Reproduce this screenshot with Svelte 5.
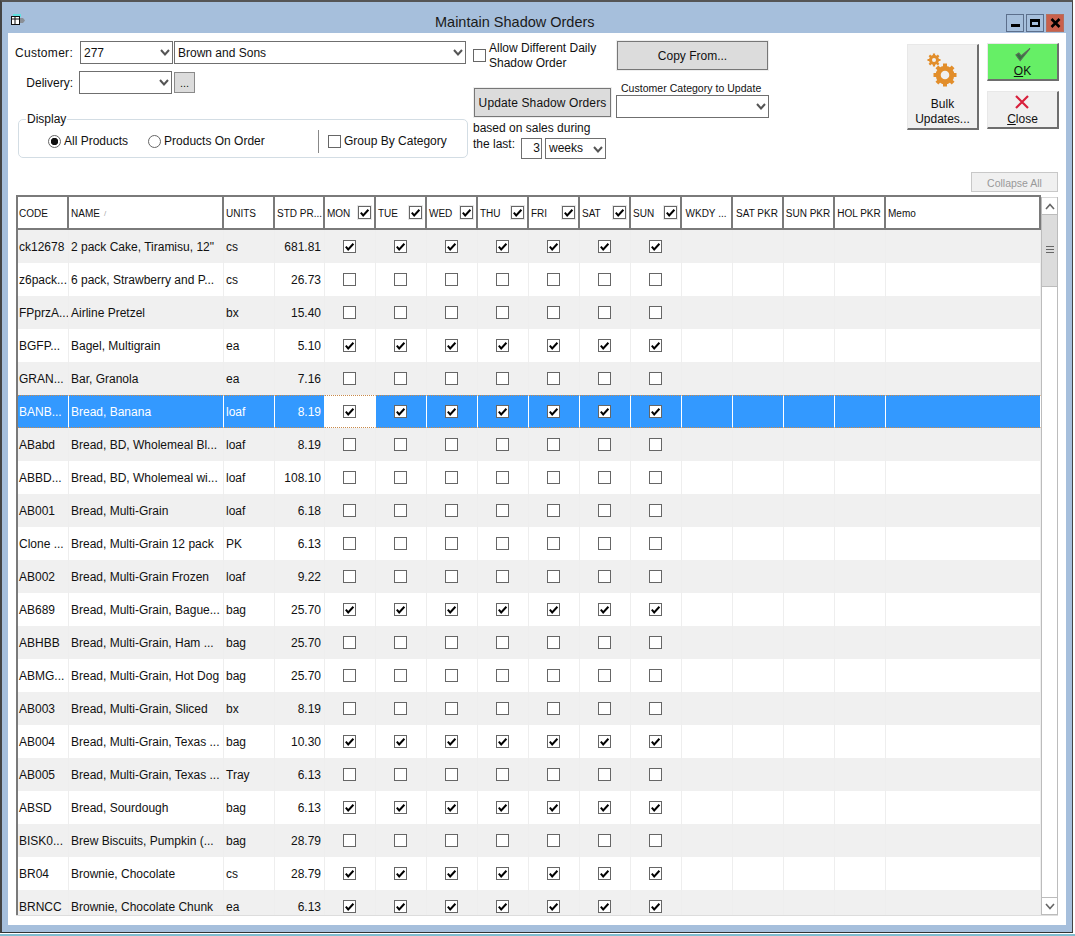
<script lang="ts">
	const days = ['MON', 'TUE', 'WED', 'THU', 'FRI', 'SAT', 'SUN']
	const pickers = ['WKDY ...', 'SAT PKR', 'SUN PKR', 'HOL PKR']

	const products = [
		['ck12678', '2 pack Cake, Tiramisu, 12"', 'cs', '681.81', true],
		['z6pack...', '6 pack, Strawberry and P...', 'cs', '26.73', false],
		['FPprzA...', 'Airline Pretzel', 'bx', '15.40', false],
		['BGFP...', 'Bagel, Multigrain', 'ea', '5.10', true],
		['GRAN...', 'Bar, Granola', 'ea', '7.16', false],
		['BANB...', 'Bread, Banana', 'loaf', '8.19', true],
		['ABabd', 'Bread, BD, Wholemeal Bl...', 'loaf', '8.19', false],
		['ABBD...', 'Bread, BD, Wholemeal wi...', 'loaf', '108.10', false],
		['AB001', 'Bread, Multi-Grain', 'loaf', '6.18', false],
		['Clone ...', 'Bread, Multi-Grain 12 pack', 'PK', '6.13', false],
		['AB002', 'Bread, Multi-Grain Frozen', 'loaf', '9.22', false],
		['AB689', 'Bread, Multi-Grain, Bague...', 'bag', '25.70', true],
		['ABHBB', 'Bread, Multi-Grain, Ham ...', 'bag', '25.70', false],
		['ABMG...', 'Bread, Multi-Grain, Hot Dog', 'bag', '25.70', false],
		['AB003', 'Bread, Multi-Grain, Sliced', 'bx', '8.19', false],
		['AB004', 'Bread, Multi-Grain, Texas ...', 'bag', '10.30', true],
		['AB005', 'Bread, Multi-Grain, Texas ...', 'Tray', '6.13', false],
		['ABSD', 'Bread, Sourdough', 'bag', '6.13', true],
		['BISK0...', 'Brew Biscuits, Pumpkin (...', 'bag', '28.79', false],
		['BR04', 'Brownie, Chocolate', 'cs', '28.79', true],
		['BRNCC', 'Brownie, Chocolate Chunk', 'ea', '6.13', true],
	]
	const selectedRow = 5
</script>

{#snippet combo(text, width)}
	<div class="combo" style="width: {width}px">
		<span>{text}</span>
		<svg class="chev" width="10" height="7" viewBox="0 0 10 7"><path d="M1 1 L5 5.5 L9 1" fill="none" stroke="#555" stroke-width="2" /></svg>
	</div>
{/snippet}

{#snippet check(on)}
	<span class="check">
		{#if on}
			<svg width="11" height="11" viewBox="0 0 11 11"><path d="M1.8 5.6 L4.2 8.4 L9.4 2.8" fill="none" stroke="#000" stroke-width="2" /></svg>
		{/if}
	</span>
{/snippet}

<div class="window">
	<div class="titlebar">
		<svg class="appicon" width="16" height="12" viewBox="0 0 16 12">
			<path d="M3 0 H11 V3 H3 Z" fill="#5fe0e0" />
			<rect x="1.5" y="2.5" width="8" height="8" fill="#fff" stroke="#111" />
			<path d="M1.5 5 H9.5 M5 2.5 V10.5" stroke="#111" />
			<path d="M10 4 H13 L15 6.5 L13 9 H10 Z" fill="#8a8f96" />
		</svg>
		<div class="title">Maintain Shadow Orders</div>
		<div class="winbtns">
			<div class="winbtn"><span class="min"></span></div>
			<div class="winbtn"><span class="max"></span></div>
			<div class="winbtn close">
				<svg width="11" height="10" viewBox="0 0 11 10"><path d="M1.5 1 L9.5 9 M9.5 1 L1.5 9" stroke="#000" stroke-width="2.6" /></svg>
			</div>
		</div>
	</div>

	<div class="client">
		<div class="top">
			<div class="col-fields">
				<div class="field">
					<span class="lbl">Customer:</span>
					{@render combo('277', 93)}
					{@render combo('Brown and Sons', 292)}
				</div>
				<div class="field second">
					<span class="lbl">Delivery:</span>
					{@render combo('', 93)}
					<div class="dots">...</div>
				</div>
				<fieldset class="display">
					<legend>Display</legend>
					<div class="radio on"></div>
					<span class="opt-a">All Products</span>
					<div class="radio"></div>
					<span class="opt-b">Products On Order</span>
					<div class="divider"></div>
					{@render check(false)}
					<span class="opt-c">Group By Category</span>
				</fieldset>
			</div>

			<div class="col-update">
				<div class="allow">
					{@render check(false)}
					<span>Allow Different Daily<br />Shadow Order</span>
				</div>
				<div class="gbtn update">Update Shadow Orders</div>
				<div class="based">based on sales during</div>
				<div class="last">
					<span>the last:</span>
					<div class="num">3</div>
					{@render combo('weeks', 61)}
				</div>
			</div>

			<div class="col-copy">
				<div class="gbtn copy">Copy From...</div>
				<div class="catlbl">Customer Category to Update</div>
				{@render combo('', 153)}
			</div>

			<div class="col-actions">
				<div class="actions">
					<div class="abtn bulk">
						<svg width="36" height="36" viewBox="0 0 36 36">
							<circle cx="9" cy="8" r="3.6" fill="none" stroke="#e28e2b" stroke-width="2.8" />
							<path d="M9 1.5 V14.5 M2.5 8 H15.5 M4.4 3.4 L13.6 12.6 M13.6 3.4 L4.4 12.6" stroke="#e28e2b" stroke-width="2.2" />
							<circle cx="9" cy="8" r="2" fill="#f0f0f0" />
							<circle cx="20" cy="23" r="11" fill="#f0f0f0" />
							<path d="M20 11.5 V34.5 M8.5 23 H31.5 M11.9 14.9 L28.1 31.1 M28.1 14.9 L11.9 31.1" stroke="#e28e2b" stroke-width="4" />
							<circle cx="20" cy="23" r="6.8" fill="none" stroke="#e28e2b" stroke-width="5" />
							<circle cx="20" cy="23" r="4.3" fill="#f0f0f0" />
						</svg>
						<span class="bulk-text">Bulk<br />Updates...</span>
					</div>
					<div class="stack">
						<div class="abtn ok">
							<svg width="18" height="16" viewBox="0 0 18 16"><path d="M1.5 8.5 L6 14.5 L16.5 1.5 L7 9.5 L4.5 6.5 Z" fill="#2c7a3a" stroke="#5a6a5a" stroke-width="1.2" /></svg>
							<span><u>O</u>K</span>
						</div>
						<div class="abtn cancel">
							<svg class="x" width="14" height="14" viewBox="0 0 14 14"><path d="M1 1 L13 13 M13 1 L1 13" stroke="#d8203c" stroke-width="2.2" /></svg>
							<span><u>C</u>lose</span>
						</div>
					</div>
				</div>
				<div class="collapse">Collapse All</div>
			</div>
		</div>

		<div class="grid">
			<div class="table">
				<div class="row head">
					<div class="cell">CODE</div>
					<div class="cell">NAME <span class="sort">/</span></div>
					<div class="cell">UNITS</div>
					<div class="cell right">STD PR...</div>
					{#each days as day}
						<div class="cell day"><span>{day}</span><span class="hcheck">{@render check(true)}</span></div>
					{/each}
					{#each pickers as picker}
						<div class="cell mid">{picker}</div>
					{/each}
					<div class="cell memo">Memo</div>
				</div>
				<div class="body">
					{#each products as [code, name, units, price, checked], i}
						<div class="row" class:alt={i % 2 === 0} class:selected={i === selectedRow}>
							<div class="cell">{code}</div>
							<div class="cell">{name}</div>
							<div class="cell">{units}</div>
							<div class="cell right">{price}</div>
							{#each days as day, d}
								<div class="cell mid" class:active={i === selectedRow && d === 0}>{@render check(checked)}</div>
							{/each}
							{#each pickers as picker}
								<div class="cell"></div>
							{/each}
							<div class="cell"></div>
						</div>
					{/each}
				</div>
			</div>
			<div class="scrollbar">
				<div class="arrow">
					<svg width="10" height="7" viewBox="0 0 10 7"><path d="M1 6 L5 1.5 L9 6" fill="none" stroke="#666" stroke-width="1.6" /></svg>
				</div>
				<div class="thumb"><span></span><span></span><span></span></div>
				<div class="track"></div>
				<div class="arrow down">
					<svg width="10" height="7" viewBox="0 0 10 7"><path d="M1 1 L5 5.5 L9 1" fill="none" stroke="#666" stroke-width="1.6" /></svg>
				</div>
			</div>
		</div>
	</div>
</div>
<div class="strip"></div>

<style>
	:global(body) {
		margin: 0;
		background: #fff;
		font-family: 'Liberation Sans', Arial, sans-serif;
		font-size: 12px;
		color: #111;
	}

	.window {
		box-sizing: border-box;
		width: 1073px;
		height: 933px;
		display: flex;
		flex-direction: column;
		background: #a6bfdc;
		border-top: 2px solid #555;
		border-left: 2px solid #444;
		border-right: 1px solid #444;
		border-bottom: 1px solid #333;
	}

	.strip {
		height: 2px;
		margin-top: 1px;
		background: #7fbdd0;
	}

	.titlebar {
		height: 31px;
		flex: none;
		display: flex;
		align-items: center;
	}

	.appicon {
		margin: 5px 0 0 8px;
	}

	.title {
		margin-left: 409px;
		margin-top: 8px;
		font-size: 14.5px;
		color: #1a1a1a;
	}

	.winbtns {
		margin-left: auto;
		margin-right: 8px;
		margin-top: 11px;
		display: flex;
		gap: 2px;
	}

	.winbtn {
		box-sizing: border-box;
		width: 18px;
		height: 18px;
		border: 1px solid #5c6f8c;
		display: flex;
		align-items: center;
		justify-content: center;
	}

	.winbtn.close {
		background: #c9604c;
		border-color: #b5705f;
	}

	.min {
		width: 9px;
		height: 3px;
		margin-top: 5px;
		background: #000;
	}

	.max {
		box-sizing: border-box;
		width: 10px;
		height: 8px;
		border: 2px solid #000;
		border-top-width: 3px;
	}

	.client {
		flex: 1;
		margin: 0 6px 7px 6px;
		padding: 8px 8px 9px;
		background: #fff;
		display: flex;
		flex-direction: column;
		min-height: 0;
	}

	.top {
		height: 154px;
		flex: none;
		display: flex;
	}

	.col-fields {
		width: 452px;
	}

	.field {
		display: flex;
		align-items: center;
		gap: 1px;
		margin-left: -1px;
	}

	.field.second {
		margin-top: 7px;
		gap: 2px;
	}

	.lbl {
		width: 58px;
		margin-right: 6px;
		text-align: right;
		white-space: nowrap;
		letter-spacing: 0.3px;
	}

	.field.second .lbl {
		margin-right: 4px;
		letter-spacing: 0;
	}

	.combo {
		box-sizing: border-box;
		height: 23px;
		flex: none;
		position: relative;
		display: flex;
		align-items: center;
		padding-left: 3px;
		background: #fff;
		border: 1px solid #6f6f6f;
		color: #111;
	}

	.chev {
		position: absolute;
		right: 2px;
		top: 7px;
	}

	.dots {
		box-sizing: border-box;
		width: 21px;
		height: 21px;
		background: #dcdcdc;
		border: 1px solid #8a8a8a;
		text-align: center;
		line-height: 21px;
		font-size: 11px;
	}

	.display {
		box-sizing: border-box;
		width: 450px;
		height: 46px;
		margin: 18px 0 0 2px;
		padding: 0 0 1px 29px;
		border: 1px solid #d3dde4;
		border-radius: 5px;
		display: flex;
		align-items: center;
	}

	.display legend {
		padding: 0 1px;
		margin-left: -22px;
		line-height: 14px;
	}

	.radio {
		box-sizing: border-box;
		width: 13px;
		height: 13px;
		flex: none;
		border: 1px solid #666;
		border-radius: 50%;
		background: #fff;
	}

	.radio.on {
		background: radial-gradient(circle, #111 0 3.4px, #fff 4px);
	}

	.opt-a {
		margin: 0 20px 0 3px;
	}

	.opt-b {
		margin-left: 3px;
		width: 154px;
	}

	.divider {
		width: 1px;
		height: 23px;
		flex: none;
		background: #888;
		margin-right: 9px;
	}

	.opt-c {
		margin-left: 3px;
	}

	.check {
		box-sizing: border-box;
		width: 13px;
		height: 13px;
		flex: none;
		display: inline-flex;
		align-items: center;
		justify-content: center;
		background: #fff;
		border: 1px solid #666;
	}

	.col-update {
		width: 138px;
		margin-left: 5px;
		flex: none;
		margin-right: 5px;
	}

	.allow {
		display: flex;
		align-items: center;
		gap: 3px;
		height: 29px;
		line-height: 15px;
		margin-bottom: 18px;
	}

	.gbtn {
		box-sizing: border-box;
		background: #dcdcdc;
		border: 1px solid #777;
		display: flex;
		align-items: center;
		justify-content: center;
		outline: 1px solid #eee;
	}

	.update {
		height: 29px;
		margin-left: 1px;
		letter-spacing: 0.12px;
	}

	.based {
		margin-top: 4px;
		line-height: 15px;
		white-space: nowrap;
	}

	.last {
		display: flex;
		margin-top: 2px;
		align-items: flex-start;
	}

	.last span {
		line-height: 15px;
	}

	.last > span {
		margin-top: -1px;
		width: 44px;
		flex: none;
	}

	.last .combo {
		height: 21px;
		margin-left: 3px;
	}

	.num {
		box-sizing: border-box;
		width: 21px;
		height: 21px;
		margin-left: 4px;
		padding-right: 1px;
		border: 1px solid #6f6f6f;
		text-align: right;
		line-height: 19px;
		flex: none;
	}

	.col-copy {
		width: 153px;
		flex: none;
	}

	.copy {
		height: 29px;
		margin: 0 1px 0 1px;
	}

	.catlbl {
		margin: 12px 0 0 5px;
		font-size: 10.5px;
		line-height: 13px;
		white-space: nowrap;
		letter-spacing: 0.03px;
	}

	.col-actions {
		margin-left: auto;
		display: flex;
		flex-direction: column;
		align-items: flex-end;
	}

	.actions {
		display: flex;
		gap: 8px;
		margin-right: -1px;
	}

	.abtn {
		box-sizing: border-box;
		width: 72px;
		display: flex;
		flex-direction: column;
		align-items: center;
		background: #f0f0f0;
		border: 1px solid #e8e8e8;
		border-right: 2px solid #6e6e6e;
		border-bottom: 2px solid #6e6e6e;
	}

	.bulk {
		height: 86px;
		margin-top: 3px;
		padding-top: 7px;
		text-align: center;
		line-height: 15px;
	}

	.bulk-text {
		margin-top: 9px;
	}

	.stack {
		display: flex;
		flex-direction: column;
		gap: 10px;
		margin-top: 2px;
	}

	.ok {
		height: 38px;
		background: #66ef66;
		padding-top: 3px;
	}

	.ok span {
		line-height: 16px;
		margin-top: 1px;
	}

	.cancel {
		height: 38px;
		padding-top: 3px;
	}

	.cancel .x {
		margin-right: 2px;
	}

	.cancel span {
		line-height: 14px;
		margin-top: 3px;
	}

	.collapse {
		box-sizing: border-box;
		width: 87px;
		height: 20px;
		margin-top: 42px;
		background: #f0f0f0;
		border: 1px solid #c8c8c8;
		color: #999;
		font-size: 10.5px;
		text-align: center;
		line-height: 19px;
		padding-top: 1px;
	}

	.grid {
		flex: 1;
		min-height: 0;
		display: flex;
		border-bottom: 1px solid #ddd;
	}

	.table {
		width: 1025px;
		flex: none;
		display: flex;
		flex-direction: column;
		overflow: hidden;
		border-left: 2px solid #7a7a7a;
		box-sizing: border-box;
	}

	.row {
		display: grid;
		grid-template-columns: 51px 155px 51px 50px repeat(11, 51px) 155px;
		height: 33px;
		flex: none;
		background: #fff;
	}

	.row.alt {
		background: #f0f0f0;
	}

	.cell {
		box-sizing: border-box;
		min-width: 0;
		padding-left: 2px;
		display: flex;
		align-items: center;
		white-space: nowrap;
		overflow: hidden;
		border-right: 1px solid #eeeeee;
	}

	.cell:first-child {
		padding-left: 1px;
	}

	.cell.right {
		justify-content: flex-end;
		padding-right: 3px;
	}

	.cell.mid {
		justify-content: center;
		padding-left: 0;
		padding-right: 1px;
	}

	.head {
		height: 35px;
		background: #fff;
		border-top: 2px solid #7a7a7a;
		border-bottom: 2px solid #7a7a7a;
		box-sizing: border-box;
	}

	.head .cell {
		font-size: 10px;
		padding-top: 2px;
		border-right: 2px solid #7a7a7a;
	}

	.head .cell.right {
		padding-right: 1px;
	}

	.sort {
		margin-left: 4px;
		font-size: 8px;
		color: #aaa;
	}

	.head .day {
		justify-content: space-between;
		padding-right: 2px;
		padding-top: 0;
	}

	.head .day > span:first-child {
		padding-top: 2px;
	}

	.hcheck {
		display: flex;
		padding: 1px;
		background: #e8e8e8;
	}

	.body {
		flex: 1;
		min-height: 0;
		overflow: hidden;
	}

	.selected {
		background: #3399ff;
		color: #fff;
	}

	.selected .cell {
		border-top: 1px dotted #c98a4a;
		border-bottom: 1px dotted #c98a4a;
		border-right-color: #fff;
	}

	.selected .active {
		background: #fff;
	}

	.scrollbar {
		box-sizing: border-box;
		width: 17px;
		flex: none;
		display: flex;
		flex-direction: column;
		margin-top: 2px;
		border: 1px solid #bcbcbc;
		border-top: 0;
	}

	.arrow {
		height: 17px;
		flex: none;
		display: flex;
		align-items: center;
		justify-content: center;
		background: #fff;
		border-top: 1px solid #d8d8d8;
		box-sizing: border-box;
	}

	.arrow.down {
		border-top: 1px solid #bcbcbc;
	}

	.thumb {
		box-sizing: border-box;
		height: 73px;
		flex: none;
		display: flex;
		flex-direction: column;
		align-items: center;
		gap: 2px;
		padding-top: 31px;
		background: #dcdcdc;
		border-top: 1px solid #bcbcbc;
		border-bottom: 1px solid #bcbcbc;
	}

	.thumb span {
		width: 8px;
		height: 1px;
		background: #666;
	}

	.track {
		flex: 1;
		background: #fff;
	}
</style>
